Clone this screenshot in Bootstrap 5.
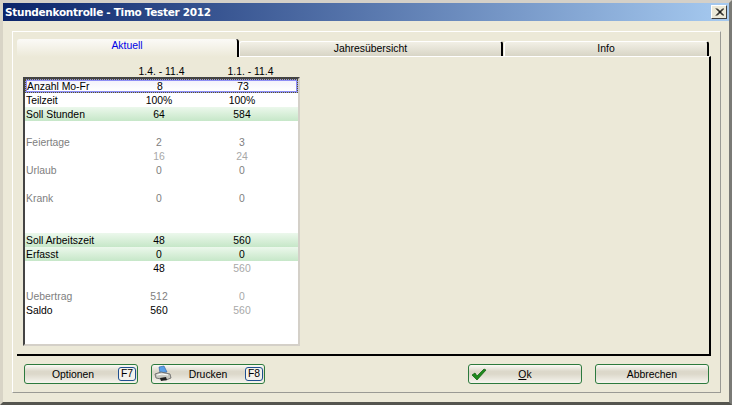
<!DOCTYPE html>
<html lang="de">
<head>
<meta charset="utf-8">
<title>Stundenkontrolle</title>
<link href="https://cdn.jsdelivr.net/npm/bootstrap@5.3.0/dist/css/bootstrap.min.css" rel="stylesheet">
<style>
html,body{margin:0;height:405px;overflow:hidden;background:#ece9d8;}
body{font-family:"Liberation Sans",Arial,sans-serif;font-size:10.4px;line-height:14px;color:#000;}
.win{width:732px;height:405px;background:#ece9d8;border-top:3px solid #d4d0c8;border-left:3px solid #d8d4c6;border-right:3px solid #7a7a76;border-bottom:3px solid #55554f;opacity:.999;}
.tbar{height:18px;background:linear-gradient(90deg,#0a246a,#a6caf0);color:#fff;font-family:"DejaVu Sans",sans-serif;font-weight:700;font-size:10.5px;letter-spacing:-.3px;padding:0 2px;}
.xbtn{width:16px;height:14px;background:#ece9d8;border:1px solid;border-color:#fff #404040 #404040 #fff;margin-right:0;padding:0;line-height:0;}
.outer{margin:10px 8px 0 9px;height:362px;border:1px solid;border-color:#fff #9a9a94 #9a9a94 #fff;padding:6px 10px 0 4px;}
.tabstrip{height:18px;margin:0;border:0;flex-wrap:nowrap;align-items:flex-end;}
.tb{height:15px;text-align:center;line-height:14px;background:linear-gradient(#f2f0e6,#d8d5c6);border-top:1px solid #fff;border-left:1px solid #fff;border-right:2px solid #000;border-radius:3px 3px 0 0;color:#000;}
.tb1{width:222px;height:18px;background:linear-gradient(#fbfaf7,#ece9d8);border-right:2px solid #000;color:#0000e6;line-height:14px;border-top:0;border-left:0;margin-bottom:-1px;position:relative;z-index:1;}
.tb2{width:264px;margin-left:0;}
.tb3{width:205px;margin-left:1px;margin-right:0;}
.sheet{width:694px;height:300px;border-top:1px solid #fff;border-right:2px solid #000;border-bottom:2px solid #000;padding:7px 0 0 6px;position:relative;}
.heads{display:flex;height:13px;margin:0;line-height:16px;}
.hc1{width:94px;}
.hc2{width:89px;text-align:center;}
.hc3{width:89px;text-align:center;}
.listb{width:277px;height:269px;background:#fff;border:2px solid;border-color:#444 #d4d0c8 #d4d0c8 #444;overflow:hidden;}
.rw{display:flex;height:14px;line-height:16px;padding-left:1px;white-space:nowrap;}
.rw>span:first-child{width:115px;}
.rw>span:nth-child(2){width:36px;text-align:center;}
.rw>span:nth-child(3){width:40px;margin-left:45px;text-align:center;}
.sel{height:14px;background:linear-gradient(#f4f3fb,#fff);border:2px solid #8f8ff5;outline:1px dotted #5a5a20;outline-offset:-1px;line-height:12px;padding-left:0;}
.grn{background:linear-gradient(#ecf8ec,#c6e7c8);}
.gy{color:#808080;}
.lg{color:#a8a8a8;}
.footbar{height:20px;margin-top:8px;padding-left:7px;}
.wbtn{position:relative;width:114px;height:20px;padding:0;font-size:10.4px;line-height:17px;color:#000;text-align:center;border:1px solid #2c7a3d;border-radius:3px;background:linear-gradient(#fbfaf6 0,#dcd8ca 35%,#dcd8ca 50%,#f6f5ee 100%);display:flex;align-items:center;justify-content:center;}
.wbtn:hover{color:#000;border-color:#2c7a3d;}
.wbtn-key{padding-right:16px;}
.wbtn-gap{margin-left:13px;}
.wbtn-last{margin-left:13px;margin-right:1px;}
.kbd{position:absolute;right:1px;top:2px;width:18px;height:14px;border:1px solid #1f4f8f;border-radius:3px;background:#f3f2ec;line-height:12px;}
.ico{position:absolute;left:1px;top:0;}
.ico-ok{left:2px;top:3px;}
.oku{text-decoration:underline;}
</style>
</head>
<body>
<div class="win d-flex flex-column">
  <div class="tbar d-flex align-items-center justify-content-between">
    <span>Stundenkontrolle - Timo Tester 2012</span>
    <button class="xbtn d-flex align-items-center justify-content-center" aria-label="Schließen">
      <svg width="9" height="8" viewBox="0 0 9 8"><path d="M1 0.5 8 7.5M2 0.5 9 7.5M8 0.5 1 7.5M9 0.5 2 7.5" stroke="#000" stroke-width="1" fill="none"/></svg>
    </button>
  </div>
  <div class="outer">
    <ul class="nav tabstrip">
      <li class="tb tb1">Aktuell</li>
      <li class="tb tb2">Jahresübersicht</li>
      <li class="tb tb3">Info</li>
    </ul>
    <div class="sheet">
      <div class="heads"><span class="hc1"></span><span class="hc2">1.4. - 11.4</span><span class="hc3">1.1. - 11.4</span></div>
      <div class="listb">
        <div class="rw sel"><span>Anzahl Mo-Fr</span><span>8</span><span>73</span></div>
        <div class="rw"><span>Teilzeit</span><span>100%</span><span>100%</span></div>
        <div class="rw grn"><span>Soll Stunden</span><span>64</span><span>584</span></div>
        <div class="rw"></div>
        <div class="rw gy"><span>Feiertage</span><span>2</span><span>3</span></div>
        <div class="rw lg"><span></span><span>16</span><span>24</span></div>
        <div class="rw gy"><span>Urlaub</span><span>0</span><span>0</span></div>
        <div class="rw"></div>
        <div class="rw gy"><span>Krank</span><span>0</span><span>0</span></div>
        <div class="rw"></div>
        <div class="rw"></div>
        <div class="rw grn"><span>Soll Arbeitszeit</span><span>48</span><span>560</span></div>
        <div class="rw grn"><span>Erfasst</span><span>0</span><span>0</span></div>
        <div class="rw"><span></span><span>48</span><span class="lg">560</span></div>
        <div class="rw"></div>
        <div class="rw gy"><span>Uebertrag</span><span>512</span><span class="lg">0</span></div>
        <div class="rw"><span>Saldo</span><span>560</span><span class="lg">560</span></div>
      </div>
    </div>
    <div class="footbar d-flex">
      <a class="btn wbtn wbtn-key" href="#">Optionen<span class="kbd">F7</span></a>
      <a class="btn wbtn wbtn-gap" href="#">
        <svg class="ico" width="20" height="18" viewBox="0 0 20 18"><path d="M6 2 11 1 14 7 7 8Z" fill="#5aa0e8" stroke="#2a5aa0" stroke-width=".6"/><path d="M2 9 8 7 17 9 18 13 13 15 3 13Z" fill="#c8c8c0" stroke="#606060" stroke-width=".8"/><path d="M7 13 13 12 14 15 8 16Z" fill="#202020"/><path d="M4 10 9 9 15 10" stroke="#fff" fill="none"/></svg>
        Drucken<span class="kbd">F8</span></a>
      <span class="flex-grow-1"></span>
      <a class="btn wbtn" href="#"><svg class="ico ico-ok" width="16" height="14" viewBox="0 0 16 14"><path d="M1 7 4 5 6 8 13 1 15 2 6 12Z" fill="#1d8a1d" stroke="#0b5a0b" stroke-width=".7"/></svg><span><span class="oku">O</span>k</span></a>
      <a class="btn wbtn wbtn-last" href="#">Abbrechen</a>
    </div>
  </div>
</div>
</body>
</html>
